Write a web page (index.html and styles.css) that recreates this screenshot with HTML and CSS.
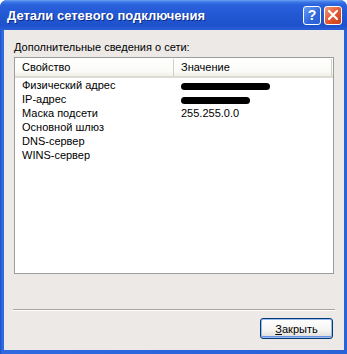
FILE: index.html
```html
<!DOCTYPE html>
<html>
  <head lang="ru">
    <meta charset="UTF-8" />
    <title>Детали сетевого подключения</title>
    <link rel="stylesheet" href="styles.css">
  </head>

  <body>
    <div class="window">
      <div class="titlebar">
        <span class="title">Детали сетевого подключения</span>
        <div class="caption-btns">
          <span class="cap-btn help">?</span>
          <span class="cap-btn close">
            <svg width="12" height="12" viewBox="0 0 12 12">
              <path d="M2 2 L10 10 M10 2 L2 10" stroke="#fff" stroke-width="2.2" stroke-linecap="round" />
            </svg>
          </span>
        </div>
      </div>

      <div class="client">
        <div class="label"><u>Д</u>ополнительные сведения о сети:</div>

        <div class="listview">
          <div class="lv-head">
            <div class="lv-col first">Свойство</div>
            <div class="lv-col">Значение</div>
          </div>
          <div class="lv-body">
            <div class="lv-row">
              <span>Физический адрес</span>
              <span><i class="blot" style="width: 89px"></i></span>
            </div>
            <div class="lv-row">
              <span>IP-адрес</span>
              <span><i class="blot" style="width: 69px"></i></span>
            </div>
            <div class="lv-row">
              <span>Маска подсети</span>
              <span>255.255.0.0</span>
            </div>
            <div class="lv-row">
              <span>Основной шлюз</span>
              <span></span>
            </div>
            <div class="lv-row">
              <span>DNS-сервер</span>
              <span></span>
            </div>
            <div class="lv-row">
              <span>WINS-сервер</span>
              <span></span>
            </div>
          </div>
        </div>

        <div class="separator"></div>

        <div class="buttons">
          <button class="btn"><u>З</u>акрыть</button>
        </div>
      </div>
    </div>
  </body>
</html>
```

FILE: styles.css
```css
* {
  padding: 0;
  margin: 0;
  box-sizing: border-box;
}

body {
  background-color: #fff;
  font: 11px "Liberation Sans", Arial, sans-serif;
  color: #000;
}

.window {
  width: 347px;
  height: 354px;
  display: flex;
  flex-direction: column;
  border-radius: 7px 7px 0 0;
  background: linear-gradient(to right, #1d4fc4, #2f6ae0 2px, #2a62d8);
  overflow: hidden;
}

.titlebar {
  height: 30px;
  display: flex;
  align-items: center;
  padding-left: 7px;
  background: linear-gradient(to bottom, #6ea2f2 0, #3a78e8 2px, #2960dc 5px, #2358d3 50%, #1e52cd 85%, #2a5fd8 100%);
}

.title {
  flex: 1;
  font: bold 13px "Liberation Sans", Arial, sans-serif;
  color: #fff;
  text-shadow: 1px 1px 0 #0a2a8a;
  padding-top: 1px;
}

.caption-btns {
  display: flex;
  gap: 3px;
  margin-right: 5px;
}

.cap-btn {
  width: 18px;
  height: 19px;
  border: 1px solid #fff;
  border-radius: 3px;
  display: flex;
  align-items: center;
  justify-content: center;
}

.help {
  background: linear-gradient(135deg, #6a9cf2, #2f67dc 60%, #2a5ed4);
  color: #fff;
  font: bold 14px "Liberation Sans", Arial, sans-serif;
}

.close {
  background: linear-gradient(135deg, #f09a7a, #e2552c 55%, #c8401c);
}

.client {
  flex: 1;
  margin: 0 3px 4px 4px;
  background-color: #ece9e6;
  display: flex;
  flex-direction: column;
  padding: 11px 0 0 10px;
}

.label {
  height: 13px;
  line-height: 13px;
  margin-bottom: 3px;
}

.listview {
  width: 320px;
  height: 217px;
  border: 1px solid #9d9d9d;
  background-color: #fff;
}

.lv-head {
  display: flex;
  height: 20px;
  border-bottom: 2px solid #dedbd4;
  background: linear-gradient(to bottom, #fff, #fbfbf9 70%, #f1efe8);
}

.lv-col {
  width: 158px;
  line-height: 17px;
  padding-left: 7px;
  border-right: 1px solid #d3d0c9;
  margin-top: 1px;
}

.lv-col.first {
  width: 159px;
}

.lv-row {
  display: grid;
  grid-template-columns: 159px 1fr;
  height: 14px;
  line-height: 14px;
}

.lv-row span {
  padding-left: 7px;
}

.blot {
  display: inline-block;
  height: 7px;
  background-color: #000;
  border-radius: 4px;
  vertical-align: middle;
}

.separator {
  width: 322px;
  margin: 35px 0 0 -1px;
  border-top: 1px solid #a8a5a0;
  border-bottom: 1px solid #fff;
}

.buttons {
  display: flex;
  justify-content: flex-end;
  padding-right: 11px;
  margin-top: 7px;
}

.btn {
  width: 73px;
  height: 21px;
  font: 11px "Liberation Sans", Arial, sans-serif;
  color: #000;
  border: 1px solid #003c74;
  border-radius: 3px;
  background: linear-gradient(to bottom, #fff, #f4f4f0 60%, #dcdad5);
  box-shadow: inset 0 0 0 1px #9dbaf0, inset 0 -1px 0 1px #6b92e0;
}
```
